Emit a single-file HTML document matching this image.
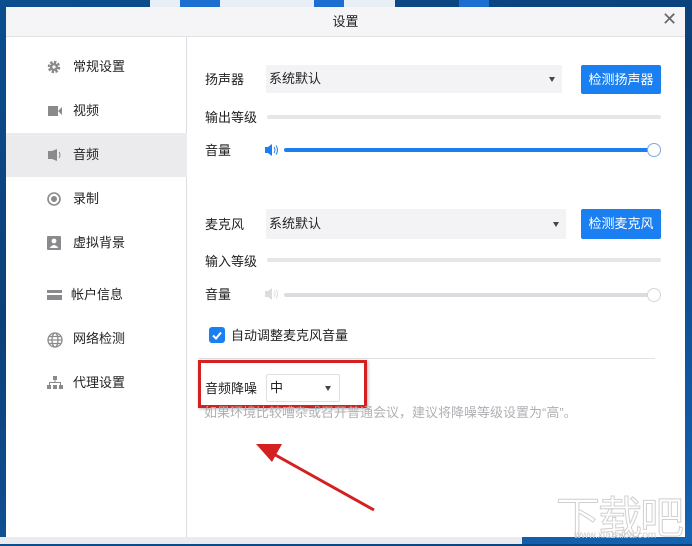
<!DOCTYPE html>
<html><head><meta charset="utf-8"><style>
*{margin:0;padding:0;box-sizing:border-box}
body{width:692px;height:544px;overflow:hidden;position:relative;background:linear-gradient(160deg,#0a4f8f 0%,#0c3f78 40%,#1463b3 100%);font-family:"Liberation Sans","Noto Sans CJK SC",sans-serif;font-size:13px;color:#222}
.a{position:absolute}
.dlg{left:6px;top:7px;width:679px;height:530px;background:#fff}
.tb{left:6px;top:7px;width:679px;height:30px;background:#f5f5f7;border-bottom:1px solid #e2e2e4;text-align:center;line-height:30px;font-size:13px}
.side{left:6px;top:37px;width:181px;height:500px;border-right:1px solid #dedee0}
.it{left:6px;width:181px;height:44px;line-height:44px}
.it span{position:absolute;left:67px}
.it svg{position:absolute;left:41px;top:15px}
.sel{background:#f3f3f6;height:28px;line-height:28px;padding-left:3px}
.sel i{position:absolute;right:7px;top:12px;border-left:3.5px solid transparent;border-right:3.5px solid transparent;border-top:5px solid #444}
.btn{background:#1a7ff0;color:#fff;height:29px;line-height:29px;text-align:center;border-radius:2px;width:80px}
.bar{height:4px;border-radius:2px;background:#e6e6e8}
.lbl{left:205px}
</style></head><body>
<div class="a" style="left:150px;top:0;width:245px;height:7px;background:#e8eef5"></div>
<div class="a" style="left:180px;top:0;width:40px;height:7px;background:#1c6fd0"></div>
<div class="a" style="left:314px;top:0;width:30px;height:7px;background:#1c6fd0"></div>
<div class="a" style="left:459px;top:0;width:30px;height:7px;background:#1c6fd0"></div>
<div class="a" style="left:0;top:537px;width:522px;height:7px;background:#e9ebee"></div>
<div class="a dlg"></div>
<div class="a tb">设置</div>
<div class="a" style="left:662px;top:9px;font-size:18px;color:#666">✕</div>
<div class="a side"></div>
<div class="a" style="left:6px;top:133px;width:181px;height:44px;background:#ebebed"></div>
<div class="a it" style="top:45px"><svg width="14" height="14" viewBox="0 0 14 14"><circle cx="7" cy="7" r="4.5" fill="none" stroke="#8a8a8c" stroke-width="3.5" stroke-dasharray="2.2 1.3"/><circle cx="7" cy="7" r="4" fill="#8a8a8c"/><circle cx="7" cy="7" r="1.6" fill="#fff"/></svg><span>常规设置</span></div>
<div class="a it" style="top:89px"><svg width="16" height="14" viewBox="0 0 16 14"><rect x="1" y="2" width="10" height="10" fill="#8a8a8c"/><path d="M11 7l4-4v8z" fill="#8a8a8c"/></svg><span>视频</span></div>
<div class="a it" style="top:133px"><svg width="16" height="14" viewBox="0 0 16 14"><path d="M1 3h4l5-2v12l-5-2H1z" fill="#8a8a8c"/><path d="M12 4q2 3 0 6" stroke="#8a8a8c" fill="none"/></svg><span>音频</span></div>
<div class="a it" style="top:177px"><svg width="15" height="15" viewBox="0 0 15 15"><circle cx="7" cy="7" r="6" fill="none" stroke="#8a8a8c" stroke-width="1.6"/><circle cx="7" cy="7" r="3" fill="#8a8a8c"/></svg><span>录制</span></div>
<div class="a it" style="top:221px"><svg width="14" height="14" viewBox="0 0 14 14"><rect x="0" y="0" width="14" height="14" rx="1" fill="#8a8a8c"/><circle cx="7" cy="5" r="2.4" fill="#fff"/><path d="M2.5 12q4.5-6 9 0z" fill="#fff"/></svg><span>虚拟背景</span></div>
<div class="a it" style="top:273px"><svg width="16" height="14" viewBox="0 0 16 14"><rect x="0" y="2" width="15" height="10" fill="#8a8a8c"/><rect x="0" y="5" width="15" height="2" fill="#fff"/></svg><span style="left:65px">帐户信息</span></div>
<div class="a it" style="top:317px"><svg width="16" height="16" viewBox="0 0 16 16"><g fill="none" stroke="#8a8a8c" stroke-width="1.3"><circle cx="8" cy="8" r="7"/><ellipse cx="8" cy="8" rx="3" ry="7"/><path d="M1 8h14M2 4.5h12M2 11.5h12"/></g></svg><span>网络检测</span></div>
<div class="a it" style="top:361px"><svg width="16" height="14" viewBox="0 0 16 14"><g fill="#8a8a8c"><rect x="6" y="0" width="4" height="4"/><rect x="0" y="9" width="4" height="4"/><rect x="6" y="9" width="4" height="4"/><rect x="12" y="9" width="4" height="4"/><rect x="7.5" y="4" width="1" height="3"/><rect x="2" y="6" width="12" height="1"/><rect x="2" y="6" width="1" height="3"/><rect x="13" y="6" width="1" height="3"/></g></svg><span>代理设置</span></div>

<div class="a lbl" style="top:69px">扬声器</div>
<div class="a sel" style="left:266px;top:65px;width:296px">系统默认<i></i></div>
<div class="a btn" style="left:581px;top:65px">检测扬声器</div>
<div class="a lbl" style="top:107px">输出等级</div>
<div class="a bar" style="left:267px;top:115px;width:394px"></div>
<div class="a lbl" style="top:140px">音量</div>
<svg class="a" style="left:265px;top:144px" width="14" height="12" viewBox="0 0 14 12"><path d="M0 3h3l4-3v12l-4-3H0z" fill="#1a7ff0"/><path d="M9 3q2 3 0 6M11 1.5q3 4.5 0 9" stroke="#1a7ff0" fill="none"/></svg>
<div class="a" style="left:284px;top:148px;width:366px;height:4px;border-radius:2px;background:#1a7ff0"></div>
<div class="a" style="left:647px;top:143px;width:14px;height:14px;border-radius:50%;background:#fff;border:1px solid #7aa9e0"></div>

<div class="a lbl" style="top:214px">麦克风</div>
<div class="a sel" style="left:266px;top:209px;width:300px;height:30px;line-height:30px">系统默认<i style="top:13px"></i></div>
<div class="a btn" style="left:581px;top:209px;height:30px;line-height:30px">检测麦克风</div>
<div class="a lbl" style="top:251px">输入等级</div>
<div class="a bar" style="left:267px;top:258px;width:394px"></div>
<div class="a lbl" style="top:284px">音量</div>
<svg class="a" style="left:265px;top:288px" width="14" height="12" viewBox="0 0 14 12"><path d="M0 3h3l4-3v12l-4-3H0z" fill="#dcdcde"/><path d="M9 3q2 3 0 6M11 1.5q3 4.5 0 9" stroke="#dcdcde" fill="none"/></svg>
<div class="a" style="left:284px;top:293px;width:366px;height:4px;border-radius:2px;background:#dcdce0"></div>
<div class="a" style="left:647px;top:288px;width:14px;height:14px;border-radius:50%;background:#fff;border:1px solid #d6d6da"></div>

<div class="a" style="left:209px;top:327px;width:16px;height:16px;border-radius:3px;background:#1a7ff0"></div>
<svg class="a" style="left:209px;top:327px" width="16" height="16" viewBox="0 0 16 16"><path d="M4 8.5l3 3 5-6" stroke="#fff" stroke-width="2" fill="none"/></svg>
<div class="a" style="left:231px;top:325px">自动调整麦克风音量</div>
<div class="a" style="left:198px;top:358px;width:457px;height:1px;background:#e2e2e4"></div>

<div class="a" style="left:205px;top:378px">音频降噪</div>
<div class="a" style="left:266px;top:374px;width:74px;height:28px;border:1px solid #e0e0e2;border-radius:2px;line-height:26px;padding-left:3px">中<i style="position:absolute;right:8px;top:11px;border-left:3.5px solid transparent;border-right:3.5px solid transparent;border-top:5px solid #444"></i></div>
<div class="a" style="left:198px;top:360px;width:169px;height:48px;border:3px solid #d42020;box-shadow:1px 1px 3px rgba(0,0,0,.3)"></div>
<div class="a" style="left:204px;top:402px;color:#b0b0b4;font-size:13px">如果环境比较嘈杂或召开普通会议，建议将降噪等级设置为“高”。</div>

<svg class="a" style="left:250px;top:440px" width="130" height="75" viewBox="0 0 130 75"><path d="M124 70L20 12" stroke="#d42020" stroke-width="3"/><path d="M6 4l26 0-10 18z" fill="#d42020"/></svg>
<div class="a" style="left:556px;top:482px;font-size:44px;color:#fff;opacity:.9;-webkit-text-stroke:1px #ccc;letter-spacing:-2px">下载吧</div>
<div class="a" style="left:574px;top:530px;font-size:10px;color:#ccc">www.xiazaiba.com</div>
</body></html>
